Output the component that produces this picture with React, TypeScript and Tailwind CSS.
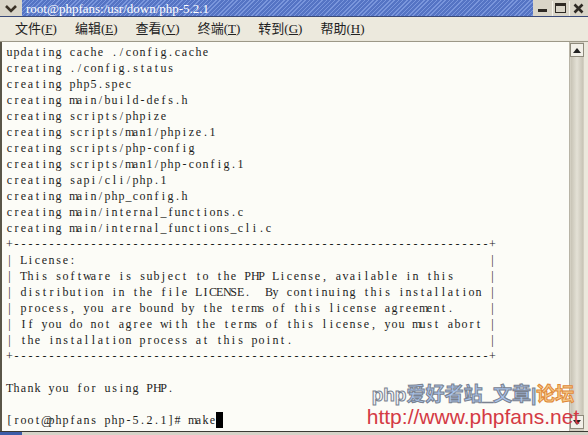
const rule = "+" + "-".repeat(68) + "+";
const boxed = (s: string) => "| " + s.padEnd(67) + "|";

const lines = [
  "updating cache ./config.cache",
  "creating ./config.status",
  "creating php5.spec",
  "creating main/build-defs.h",
  "creating scripts/phpize",
  "creating scripts/man1/phpize.1",
  "creating scripts/php-config",
  "creating scripts/man1/php-config.1",
  "creating sapi/cli/php.1",
  "creating main/php_config.h",
  "creating main/internal_functions.c",
  "creating main/internal_functions_cli.c",
  rule,
  boxed("License:"),
  boxed("This software is subject to the PHP License, available in this"),
  boxed("distribution in the file LICENSE.  By continuing this installation"),
  boxed("process, you are bound by the terms of this license agreement."),
  boxed("If you do not agree with the terms of this license, you must abort"),
  boxed("the installation process at this point."),
  rule,
  "",
  "Thank you for using PHP.",
  "",
  "[root@phpfans php-5.2.1]# make",
];

const menus = [
  ["文件", "F"],
  ["编辑", "E"],
  ["查看", "V"],
  ["终端", "T"],
  ["转到", "G"],
  ["帮助", "H"],
];

function TermLine({ text, cursor }: { text: string; cursor?: boolean }) {
  return (
    <div className="flex h-[16px] items-center leading-[16px]">
      {text.split("").map((c, i) => (
        <span key={i} className="inline-block w-[7px] shrink-0 text-center whitespace-pre">
          {c}
        </span>
      ))}
      {cursor && <span className="inline-block w-[7px] h-[16px] shrink-0 bg-black" />}
    </div>
  );
}

export default function App() {
  return (
    <div className="w-[588px] h-[435px] overflow-hidden relative flex flex-col bg-[#e9e6da]">
      {/* title bar */}
      <div className="h-[17px] flex shrink-0 border-b border-[#3a4a78]">
        <div className="w-[22px] bg-[#d9d5c8] flex items-center justify-center">
          <svg width="12" height="9" viewBox="0 0 12 9">
            <path d="M1 2 L6 7 L11 2" stroke="#3a3226" strokeWidth="2.6" fill="none" />
          </svg>
        </div>
        <div className="flex-1 flex items-center pl-[4px] bg-[repeating-linear-gradient(135deg,#5574c4_0px,#5574c4_2px,#7a96dc_2px,#7a96dc_3px)] text-white text-[13px] font-['Liberation_Serif',serif] leading-none">
          root@phpfans:/usr/down/php-5.2.1
        </div>
        <div className="w-[55px] bg-[#d9d5c8] flex items-center justify-around px-[1px]">
          <div className="w-[15px] h-[15px] flex items-end justify-center pb-[4px]">
            <div className="w-[9px] h-[3px] bg-[#2e2a24]" />
          </div>
          <div className="w-[15px] h-[15px] flex items-center justify-center border-l border-[#f4f2ea]">
            <div className="w-[11px] h-[10px] border border-[#2e2a24] border-t-[3px]" />
          </div>
          <div className="w-[17px] h-[15px] flex items-center justify-center border-l border-[#f4f2ea]">
            <svg width="11" height="11" viewBox="0 0 11 11">
              <path d="M1.5 1.5 L9.5 9.5 M9.5 1.5 L1.5 9.5" stroke="#2e2a24" strokeWidth="2.6" />
            </svg>
          </div>
        </div>
      </div>

      {/* menu bar */}
      <div className="h-[23px] shrink-0 flex items-center gap-[18px] pl-[15px] bg-[#ece9dd] text-[13px] text-[#222] font-['Liberation_Serif','Noto_Sans_CJK_SC',serif]">
        {menus.map(([label, key]) => (
          <span key={key} className="whitespace-nowrap">
            {label}(<span className="underline">{key}</span>)
          </span>
        ))}
      </div>

      {/* terminal + scrollbar */}
      <div className="flex-1 flex min-h-0 border-t border-[#9c9888] mt-[1px]">
        <div className="flex-1 bg-[#fcfcf7] border-l-2 border-[#5a5648] pt-[2px] pl-[4px] text-[12px] text-[#1c1c1c] font-['Liberation_Serif',serif]">
          {lines.map((l, i) => (
            <TermLine key={i} text={l} cursor={i === lines.length - 1} />
          ))}
        </div>
        <div className="w-[15px] flex flex-col bg-[#d3cfc2] border-l border-[#b8b4a6]">
          <div className="h-[14px] mt-[1px] bg-[#f2f0e8] border border-[#8e8a7c] flex items-center justify-center">
            <svg width="8" height="5" viewBox="0 0 8 5">
              <path d="M0 5 L4 0 L8 5 Z" fill="#222" />
            </svg>
          </div>
          <div className="flex-1 mx-[1px] bg-[linear-gradient(90deg,#c8c4b6,#e4e1d6,#c8c4b6)]" />
          <div className="h-[14px] mb-[2px] bg-[#f2f0e8] border border-[#8e8a7c] flex items-center justify-center">
            <svg width="8" height="5" viewBox="0 0 8 5">
              <path d="M0 0 L4 5 L8 0 Z" fill="#222" />
            </svg>
          </div>
        </div>
        <div className="w-[4px] bg-[#ebe8dc]" />
      </div>
      <div className="h-[4px] shrink-0 flex border-t border-[#3c3a34]">
        <div className="w-[22px] bg-[#3c5ca8]" />
        <div className="flex-1 bg-[#d6d3c8]" />
      </div>

      {/* watermark */}
      <div className="absolute left-[365px] top-[385px] w-[216px] flex flex-col items-center leading-none pointer-events-none">
        <div className="text-[19px] font-bold font-['Liberation_Sans','Noto_Sans_CJK_SC',sans-serif] text-[#a9c4ec] [-webkit-text-stroke:1px_#7a8290]">
          <span className="text-[#f4f6fa]">php</span>爱好者站_文章|<span className="text-[#f6c98a] [-webkit-text-stroke:1px_#e08a3a]">论坛</span>
        </div>
        <div className="text-[21px] mt-[2px] font-['Liberation_Sans',sans-serif] text-[#d43a44]">
          http://www.phpfans.net
        </div>
      </div>
    </div>
  );
}
